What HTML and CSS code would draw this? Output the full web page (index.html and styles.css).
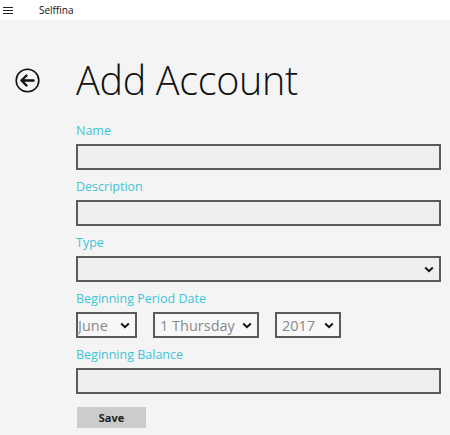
FILE: index.html
```html
<!DOCTYPE html>
<html>
<head>
<meta charset="utf-8">
<link rel="stylesheet" href="styles.css">
</head>
<body>
<div class="topbar">
  <div class="burger"><span></span><span></span><span></span></div>
  <div class="app">Selffina</div>
</div>
<div class="page">
  <div class="header">
    <div class="back">
      <svg width="25" height="25" viewBox="0 0 25 25">
        <circle cx="12.5" cy="12.5" r="11.3" fill="none" stroke="#111" stroke-width="1.6"/>
        <path d="M6.5 12.5 H18.5 M11.5 7.5 L6.5 12.5 L11.5 17.5" fill="none" stroke="#111" stroke-width="2.4" stroke-linecap="round" stroke-linejoin="round"/>
      </svg>
    </div>
    <h1 class="title">Add Account</h1>
  </div>
  <div class="form">
    <div class="field">
      <div class="label">Name</div>
      <div class="input"></div>
    </div>
    <div class="field">
      <div class="label">Description</div>
      <div class="input"></div>
    </div>
    <div class="field">
      <div class="label">Type</div>
      <div class="input combo">
        <svg class="chev" width="10" height="7" viewBox="0 0 10 7"><path d="M1.2 1.5 L5 5.2 L8.8 1.5" fill="none" stroke="#111" stroke-width="2"/></svg>
      </div>
    </div>
    <div class="field">
      <div class="label">Beginning Period Date</div>
      <div class="dates">
        <div class="dsel month"><span class="val">June</span><svg class="chev" width="10" height="7" viewBox="0 0 10 7"><path d="M1.2 1.5 L5 5.2 L8.8 1.5" fill="none" stroke="#111" stroke-width="2"/></svg></div>
        <div class="dsel day"><span class="val">1 Thursday</span><svg class="chev" width="10" height="7" viewBox="0 0 10 7"><path d="M1.2 1.5 L5 5.2 L8.8 1.5" fill="none" stroke="#111" stroke-width="2"/></svg></div>
        <div class="dsel year"><span class="val">2017</span><svg class="chev" width="10" height="7" viewBox="0 0 10 7"><path d="M1.2 1.5 L5 5.2 L8.8 1.5" fill="none" stroke="#111" stroke-width="2"/></svg></div>
      </div>
    </div>
    <div class="field">
      <div class="label">Beginning Balance</div>
      <div class="input"></div>
    </div>
    <div class="actions">
      <button class="save">Save</button>
    </div>
  </div>
</div>
</body>
</html>
```
FILE: styles.css
```css
* { box-sizing: border-box; }
html, body { margin: 0; padding: 0; }
body {
  width: 450px;
  height: 435px;
  background: #f4f4f4;
  font-family: "Open Sans", "Noto Sans", sans-serif;
  color: #111;
  overflow: hidden;
}
.topbar {
  height: 20px;
  background: #ffffff;
  display: flex;
  align-items: center;
}
.burger {
  width: 10px;
  margin-left: 3px;
  display: flex;
  flex-direction: column;
  gap: 2px;
}
.burger span {
  display: block;
  height: 1px;
  background: #222;
}
.app {
  margin-left: 26px;
  font-size: 10px;
  color: #111;
}
.page {
  padding-top: 36px;
}
.header {
  display: flex;
  align-items: center;
  height: 48px;
}
.back {
  width: 76px;
  padding-left: 15px;
  display: flex;
  align-items: center;
}
.back svg { display: block; }
.title {
  margin: 0;
  font-size: 39.5px;
  font-weight: 300;
  line-height: 48px;
  color: #111;
  letter-spacing: -0.3px;
}
.form {
  margin-left: 76px;
  width: 365px;
  padding-top: 10px;
}
.field {
  display: flex;
  flex-direction: column;
}
.label {
  font-size: 12.5px;
  color: #3fc4d6;
  line-height: 17px;
  height: 30px;
  padding-top: 8px;
}
.input {
  height: 26px;
  border: 2px solid #5a5a5a;
  background: #efefef;
  position: relative;
}
.combo .chev {
  position: absolute;
  right: 5px;
  top: 8px;
}
.dates {
  display: flex;
  gap: 16px;
}
.dsel {
  height: 26px;
  border: 2px solid #5a5a5a;
  background: #f7f7f7;
  display: flex;
  align-items: center;
  justify-content: space-between;
  font-size: 14.5px;
  color: #8a8a8a;
}
.dsel .chev { margin-right: 5px; }
.month { width: 61px; padding-left: 0; }
.day { width: 106px; padding-left: 5px; }
.year { width: 66px; padding-left: 5px; }
.actions {
  padding-top: 11px;
}
.save {
  width: 69px;
  height: 21px;
  margin-left: 1px;
  border: none;
  background: #cccccc;
  font-family: "Open Sans", "Noto Sans", sans-serif;
  font-size: 11px;
  font-weight: 700;
  color: #222;
  padding: 0;
}
```
